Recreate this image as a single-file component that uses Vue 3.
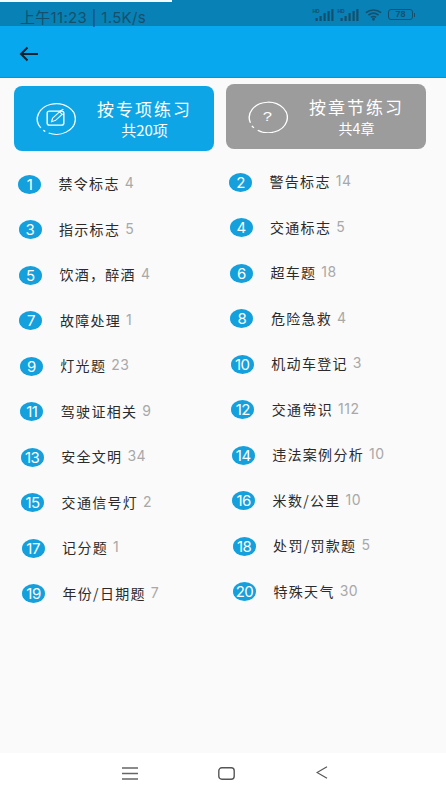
<script setup>
const items = [
  ['禁令标志', 4], ['警告标志', 14], ['指示标志', 5], ['交通标志', 5],
  ['饮酒，醉酒', 4], ['超车题', 18], ['故障处理', 1], ['危险急救', 4],
  ['灯光题', 23], ['机动车登记', 3], ['驾驶证相关', 9], ['交通常识', 112],
  ['安全文明', 34], ['违法案例分析', 10], ['交通信号灯', 2], ['米数/公里', 10],
  ['记分题', 1], ['处罚/罚款题', 5], ['年份/日期题', 7], ['特殊天气', 30],
].map(([name, count], i) => ({ name, count, n: i + 1 }))
const left = items.filter((_, i) => i % 2 === 0)
const right = items.filter((_, i) => i % 2 === 1)
const drift = (i) => ({ marginLeft: (i * 0.45).toFixed(1) + 'px' })
</script>

<template>
  <div class="page">
    <div class="status">
      <span class="sliver"></span>
      <span class="time">上午11:23 | 1.5K/s</span>
      <div class="status-icons">
        <svg v-for="k in 2" :key="k" class="signal" viewBox="0 0 21 13">
          <text x="0" y="5" font-size="5" font-weight="700" fill="#14506e" font-family="Liberation Sans">HD</text>
          <rect x="3" y="10" width="2.2" height="3" fill="#14506e" />
          <rect x="7" y="8" width="2.2" height="5" fill="#14506e" />
          <rect x="11" y="5" width="2.2" height="8" fill="#14506e" />
          <rect x="15" y="3" width="2.2" height="10" fill="#14506e" />
          <rect x="18.8" y="1" width="2.2" height="12" fill="#14506e" />
        </svg>
        <svg class="wifi" viewBox="0 0 19 13" fill="none" stroke="#14506e" stroke-width="1.8">
          <path d="M1 4.5C6 .5 13 .5 18 4.5" />
          <path d="M3.8 7.2C7.2 4.6 11.8 4.6 15.2 7.2" />
          <path d="M6.5 9.8C8.5 8.4 10.5 8.4 12.500 9.8" />
          <circle cx="9.5" cy="11.8" r=".7" fill="#14506e" />
        </svg>
        <div class="battery"><span>78</span></div>
        <i class="battery-tip"></i>
      </div>
    </div>

    <header class="appbar">
      <svg class="back" viewBox="0 0 20 16" fill="none" stroke="#0c2230" stroke-width="2">
        <path d="M19 8H2" />
        <path d="M8.5 1.5 2 8l6.5 6.5" />
      </svg>
    </header>

    <main class="content">
      <div class="tabs">
        <div class="tab blue">
          <svg class="tab-icon" viewBox="0 0 42 42" preserveAspectRatio="none" fill="none" stroke="#fff">
            <path d="M6 33A19.500 19.500 0 1 1 14 39.500" stroke-width="1.400" />
            <path d="M8.500 36 10.500 37.500" stroke-width="1.400" />
            <rect x="12.500" y="11.500" width="17" height="18" rx="2.500" stroke-width="1.500" />
            <path d="M17 25l1-4.500 7-8 3 3-7 8z" fill="#0ea5e6" stroke-width="1.200" />
            <path d="M25.500 12 29 9" stroke-width="1.400" />
          </svg>
          <div class="tab-text">
            <div class="tab-title">按专项练习</div>
            <div class="tab-sub">共20项</div>
          </div>
        </div>
        <div class="tab grey">
          <svg class="tab-icon" viewBox="0 0 42 42" preserveAspectRatio="none" fill="none" stroke="#fff">
            <path d="M3.500 29A19.500 19.500 0 1 1 11 38.500" stroke-width="1.400" />
            <path d="M5 33 7 35.500" stroke-width="1.400" />
            <text x="21" y="27" text-anchor="middle" font-size="17" fill="#fff" stroke="none" font-family="Liberation Sans">?</text>
          </svg>
          <div class="tab-text">
            <div class="tab-title">按章节练习</div>
            <div class="tab-sub sm">共4章</div>
          </div>
        </div>
      </div>

      <div class="lists">
        <ul class="col col-left">
          <li v-for="(it, i) in left" :key="it.n" class="row" :style="drift(i)">
            <span class="num">{{ it.n }}</span>
            <span class="name">{{ it.name }}</span>
            <span class="count">{{ it.count }}</span>
          </li>
        </ul>
        <ul class="col col-right">
          <li v-for="(it, i) in right" :key="it.n" class="row" :style="drift(i)">
            <span class="num">{{ it.n }}</span>
            <span class="name">{{ it.name }}</span>
            <span class="count">{{ it.count }}</span>
          </li>
        </ul>
      </div>
    </main>

    <footer class="nav">
      <svg class="nav-menu" viewBox="0 0 16 13" fill="none" stroke="#666" stroke-width="1.300">
        <path d="M0 1h16M0 6.500h16M0 12h16" />
      </svg>
      <svg class="nav-home" viewBox="0 0 17 13" fill="none" stroke="#555" stroke-width="1.400">
        <rect x=".8" y=".8" width="15.400" height="11.400" rx="3" />
      </svg>
      <svg class="nav-back" viewBox="0 0 12 13" fill="none" stroke="#555" stroke-width="1.200">
        <path d="M11 .8 1 6.500l10 5.700" />
      </svg>
    </footer>
  </div>
</template>

<style scoped>
.page {
  width: 446px;
  height: 794px;
  display: flex;
  flex-direction: column;
  overflow: hidden;
  background: #fff;
  font-family: "Noto Sans CJK SC", "Noto Sans", sans-serif;
}
.status {
  position: relative;
  flex: 0 0 26px;
  display: flex;
  align-items: center;
  justify-content: space-between;
  padding: 4px 31px 0 20px;
  box-sizing: border-box;
  background: #0881b6;
}
.sliver {
  position: absolute;
  left: 0;
  top: 0;
  width: 172px;
  height: 1.500px;
  background: #f4fbfe;
}
.time {
  margin-top: 6px;
  font: 400 15px/16px Inter, "Noto Sans CJK SC", sans-serif;
  color: #17506c;
  letter-spacing: .3px;
}
.status-icons {
  display: flex;
  align-items: center;
  gap: 3px;
  margin-top: -1px;
}
.signal { width: 22px; height: 13px; }
.wifi { width: 17px; height: 13px; margin: 0 3px; }
.battery {
  width: 25px;
  height: 11px;
  box-sizing: border-box;
  border: 1px solid #14506e;
  border-radius: 3px;
  display: flex;
  align-items: center;
  justify-content: center;
}
.battery span {
  font: 700 9px/9px "Liberation Sans", sans-serif;
  color: #14506e;
}
.battery-tip {
  width: 1.500px;
  height: 4px;
  margin-left: -2.500px;
  background: #14506e;
}
.appbar {
  flex: 0 0 52px;
  display: flex;
  align-items: center;
  padding: 5px 0 0 19px;
  box-sizing: border-box;
  background: #08a8ee;
  border-bottom: 1px solid #0a93d0;
}
.back { width: 20px; height: 16px; }
.content {
  flex: 1;
  background: #fafafa;
  display: flex;
  flex-direction: column;
}
.tabs {
  display: flex;
  align-items: flex-start;
  gap: 12px;
  padding: 6px 0 0 14px;
}
.tab {
  width: 200px;
  height: 65px;
  border-radius: 8px;
  display: flex;
  align-items: center;
  box-sizing: border-box;
  color: #fff;
}
.blue {
  margin-top: 2px;
  background: #0ea5e6;
  padding-left: 21px;
}
.grey {
  background: #9c9c9c;
  padding-left: 21px;
}
.tab-icon { width: 41px; height: 33px; }
.tab-text {
  margin-left: 21px;
  text-align: center;
}
.tab-title {
  font-size: 17px;
  line-height: 21px;
  letter-spacing: 2px;
}
.tab-sub {
  font-size: 15px;
  line-height: 18px;
  margin-top: 2px;
}
.tab-sub.sm { font-size: 14px; }
.lists {
  display: flex;
  padding: 21px 0 0 18px;
}
.col {
  list-style: none;
  margin: 0;
  padding: 0;
  display: flex;
  flex-direction: column;
  gap: 21.500px;
  width: 211px;
}
.col-right { margin-top: -2px; }
.row {
  display: flex;
  align-items: center;
  height: 24px;
}
.num {
  flex: 0 0 23px;
  height: 19px;
  border-radius: 50%;
  background: #14a0dc;
  color: #fff;
  font: 400 15px/19px Inter, "Liberation Sans", sans-serif;
  text-align: center;
  letter-spacing: -.5px;
}
.name {
  margin-left: 17.500px;
  padding-bottom: 2px;
  font-size: 14px;
  line-height: 20px;
  letter-spacing: 1.300px;
  color: #2b2b2b;
}
.count {
  margin-left: 5px;
  padding-bottom: 2px;
  font: 400 14px/20px Inter, "Liberation Sans", sans-serif;
  letter-spacing: .5px;
  color: #a8a8a8;
}
.nav {
  flex: 0 0 41px;
  position: relative;
  display: flex;
  align-items: center;
  padding: 0 0 0 122px;
  background: #fff;
}
.nav-menu { width: 16px; height: 13px; }
.nav-home { width: 17px; height: 13px; margin-left: 80px; }
.nav-back { width: 12px; height: 13px; margin-left: 81px; margin-top: -2px; }
</style>
